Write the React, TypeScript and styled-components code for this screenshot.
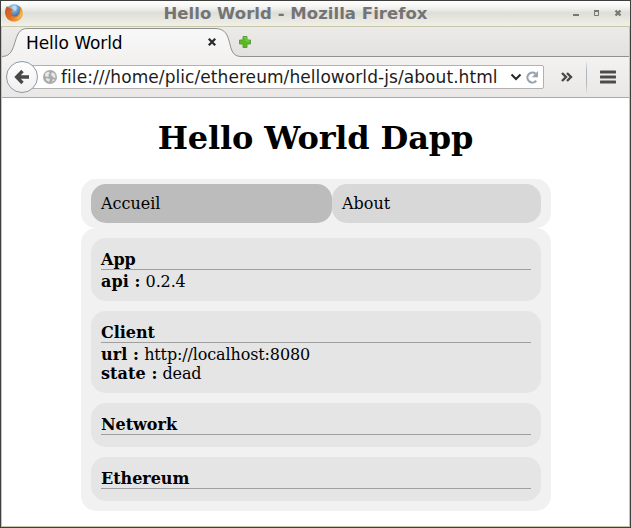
import React from 'react';
import styled, { createGlobalStyle } from 'styled-components';

const GlobalStyle = createGlobalStyle`
  * { box-sizing: border-box; }
  html, body { margin: 0; padding: 0; background: #fff; overflow: hidden; }
`;

const Window = styled.div`
  width: 631px;
  height: 528px;
  display: flex;
  flex-direction: column;
  border: 1px solid #3f403e;
  background: #fff;
`;

const TitleBar = styled.header`
  flex: none;
  height: 26px;
  display: grid;
  grid-template-columns: 20px 1fr 60px;
  align-items: center;
  border-bottom: 1px solid #c7c7ab;
  background: linear-gradient(#fff 0%, #f4f4f2 25%, #deded8 48%, #e5e5de 65%, #f0f0e7 100%);
`;

const LogoSlot = styled.div`
  padding-left: 3px;
  height: 21px;
`;

const WindowTitle = styled.div`
  text-align: center;
  font: bold 16.5px/24px 'DejaVu Sans', sans-serif;
  letter-spacing: 0.04px;
  color: #747474;
  white-space: nowrap;
`;

const Frame = styled.div`
  flex: 1;
  min-height: 0;
  display: flex;
  flex-direction: column;
  border: solid #c7c7ab;
  border-width: 0 1px 1px;
`;

const TabStrip = styled.div`
  flex: none;
  height: 30px;
  position: relative;
  background: linear-gradient(#ecebea, #e2e1e0);
`;

const TabShape = styled.svg`
  position: absolute;
  inset: 0;
`;

const TabContent = styled.div`
  position: relative;
  height: 30px;
  display: flex;
  align-items: center;
  padding-left: 24px;
`;

const TabLabel = styled.span`
  width: 181px;
  padding-top: 1px;
  font: 17px/30px 'DejaVu Sans', sans-serif;
  letter-spacing: -0.06px;
  color: #000;
`;

const NewTab = styled.span`
  display: flex;
  margin-left: 22px;
`;

const Toolbar = styled.div`
  flex: none;
  height: 41px;
  display: flex;
  align-items: center;
  border-bottom: 1px solid #aaa9a8;
  background: linear-gradient(#f3f2f1, #e9e8e7);
`;

const BackButton = styled.div`
  z-index: 1;
  width: 32px;
  height: 32px;
  flex: none;
  margin-left: 4px;
  display: flex;
  align-items: center;
  justify-content: center;
  border: 1px solid #8d9aa7;
  border-radius: 50%;
  background: linear-gradient(#fff, #efeff0);
`;

const AddressBar = styled.div`
  width: 524px;
  height: 24px;
  flex: none;
  margin-left: -18px;
  padding-left: 22px;
  display: flex;
  align-items: center;
  border: 1px solid #b2b1b0;
  border-radius: 2px;
  background: #fff;
`;

const Url = styled.span`
  flex: none;
  width: 449px;
  margin-left: 4px;
  font: 17px/22px 'DejaVu Sans', sans-serif;
  letter-spacing: 0.07px;
  color: #1c1c1c;
  white-space: nowrap;
`;

const ReloadIcon = styled.svg`
  flex: none;
  margin-left: 3px;
`;

const OverflowIcon = styled.svg`
  margin-left: 16px;
`;

const Divider = styled.i`
  width: 1px;
  height: 34px;
  margin: 0 13px 0 12px;
  background: linear-gradient(transparent, #aeb7c0 30%, #aeb7c0 70%, transparent);
`;

const Page = styled.main`
  flex: 1;
  font: 16px/19px 'DejaVu Serif', serif;
  color: #000;
`;

const Heading = styled.h1`
  margin: 21px 0 22px;
  text-align: center;
  font-size: 32px;
  line-height: 38px;
  letter-spacing: -0.15px;
`;

const Panel = styled.div<{ $nav?: boolean }>`
  width: 470px;
  margin-left: 79px;
  display: flex;
  flex-direction: ${(p) => (p.$nav ? 'row' : 'column')};
  gap: ${(p) => (p.$nav ? '0' : '10px')};
  padding: ${(p) => (p.$nav ? '5px 10px' : '10px')};
  border-radius: 15px;
  background: #f1f1f1;
`;

const NavItem = styled.a<{ $active?: boolean }>`
  width: ${(p) => (p.$active ? '241px' : '209px')};
  padding: 10px;
  border-radius: 15px;
  background: ${(p) => (p.$active ? '#bcbcbc' : '#d8d8d8')};
`;

const Card = styled.section`
  padding: 12px 10px 10px;
  border-radius: 15px;
  background: #e5e5e5;
`;

const CardTitle = styled.h2`
  margin: 0 0 2px;
  border-bottom: 1px solid #9f9f9f;
  font-size: 16px;
  line-height: 19px;
  letter-spacing: -0.03px;
`;

const RowKey = styled.b`
  letter-spacing: 0.08px;
`;

const RowValue = styled.span`
  letter-spacing: -0.13px;
`;

const sections: { title: string; rows: [string, string][] }[] = [
  { title: 'App', rows: [['api', '0.2.4']] },
  { title: 'Client', rows: [['url', 'http://localhost:8080'], ['state', 'dead']] },
  { title: 'Network', rows: [] },
  { title: 'Ethereum', rows: [] },
];

const FirefoxLogo = () => (
  <svg width="20" height="20" viewBox="0 0 20 20" display="block">
    <defs>
      <radialGradient id="globe" cx=".45" cy=".25" r=".7">
        <stop offset="0" stopColor="#b5daf0" />
        <stop offset=".6" stopColor="#5b8fc4" />
        <stop offset="1" stopColor="#2f5e99" />
      </radialGradient>
      <linearGradient id="fox" x1="0" y1="0" x2="1" y2=".6">
        <stop offset="0" stopColor="#b8572b" />
        <stop offset=".5" stopColor="#e06a24" />
        <stop offset="1" stopColor="#f0a63a" />
      </linearGradient>
    </defs>
    <circle cx="10" cy="8.500" r="7.300" fill="url(#globe)" />
    <path d="M9 3 12 2.500 13 5 11.500 8 9.500 7z" fill="#c3e2f2" opacity=".8" />
    <path d="M3 3C1.400 5.300.8 8 1.100 10.500 1.800 15.500 5.500 18.600 10 18.600c5 0 8.700-3.800 8.700-8.700 0-3-1.200-5.300-3.200-7 .6 1.500.7 3.300.4 5-.5 3.400-2.700 5.900-5.500 5.700-1.700-.1-3-1-3.600-2.300 1.400.3 2.500-.3 3.400-1.200-1.500-.3-3-.5-3.100-1.800L9.500 7C8 6.400 7.200 5.800 6 4.800 4.800 4.900 3.800 4.500 3 3z" fill="url(#fox)" />
    <path d="M16.500 5.500c1.200 5-1.300 9.800-6 10.300 3.500.8 7.200-1.500 7.200-6 0-1.700-.4-3.100-1.200-4.300z" fill="#f5c04c" />
  </svg>
);

const WindowControls = () => (
  <svg width="60" height="25" viewBox="0 0 60 25" display="block">
    <g fill="none" stroke="#777775">
      <path d="M3 14h6" strokeWidth="2" />
      <path d="M24.500 10v4.500h4V10" />
      <path d="M24 10h5" strokeWidth="2" />
      <path d="m45.500 9.500 5 5m0-5-5 5" strokeWidth="2.300" />
    </g>
  </svg>
);

export default function App() {
  return (
    <>
      <GlobalStyle />
      <Window>
        <TitleBar>
          <LogoSlot><FirefoxLogo /></LogoSlot>
          <WindowTitle>Hello World - Mozilla Firefox</WindowTitle>
          <WindowControls />
        </TitleBar>
        <Frame>
          <TabStrip>
            <TabShape width="627" height="30" viewBox="0 0 627 30">
              <defs>
                <linearGradient id="tab" x1="0" y1="0" x2="0" y2="1">
                  <stop offset="0" stopColor="#f8f8f8" />
                  <stop offset="1" stopColor="#f3f2f1" />
                </linearGradient>
              </defs>
              <path d="M0 29.500C17 29.500 9 1.500 25 1.500H213C234 1.500 222 29.500 239 29.500V30H0z" fill="url(#tab)" />
              <path d="M0 29.500C17 29.500 9 1.500 25 1.500H213C234 1.500 222 29.500 239 29.500H627" fill="none" stroke="#929191" />
            </TabShape>
            <TabContent>
              <TabLabel>Hello World</TabLabel>
              <svg width="10" height="10" viewBox="0 0 10 10"><path d="m1.800 1.800 6.400 6.400m0-6.400-6.400 6.400" stroke="#2b2b2b" strokeWidth="2.300" /></svg>
              <NewTab>
                <svg width="12" height="12" viewBox="0 0 12 12">
                  <path d="M4 .5h4V4h3.500v4H8v3.500H4V8H.5V4H4z" fill="#5cb81f" stroke="#5aa03a" />
                  <path d="M5 1.500h2V5h3.500" fill="none" stroke="#7fd040" />
                </svg>
              </NewTab>
            </TabContent>
          </TabStrip>
          <Toolbar>
            <BackButton>
              <svg width="16" height="16" viewBox="0 0 16 16"><path d="M8.500 2 2.700 8l5.800 6M3 8h12" fill="none" stroke="#484848" strokeWidth="3.400" /></svg>
            </BackButton>
            <AddressBar>
              <svg width="14" height="14" viewBox="0 0 14 14">
                <circle cx="7" cy="7" r="7" fill="#aaa" />
                <path d="M2 3.500 5 1.500l2 1.500-2 2 1.500 1L4 7 2 6zM9 2l3 2 .5 4-2-.5L8 5zM3 8l4 1-1 3-3-2zM10 9l2 1-3 2z" fill="#e7e7e7" />
              </svg>
              <Url>file:///home/plic/ethereum/helloworld-js/about.html</Url>
              <svg width="12" height="10" viewBox="0 0 12 10"><path d="m1.500 2.500 4.500 4.500 4.500-4.500" fill="none" stroke="#252525" strokeWidth="2" /></svg>
              <ReloadIcon width="14" height="14" viewBox="0 0 14 14">
                <path d="M11.200 10.800A5 5 0 1 1 10.500 3.600" fill="none" stroke="#98a5b1" strokeWidth="2.200" />
                <path d="M13 1v6.200H6.800z" fill="#98a5b1" />
              </ReloadIcon>
            </AddressBar>
            <OverflowIcon width="14" height="12" viewBox="0 0 14 12">
              <path d="m2 2 4 4-4 4m5-8 4 4-4 4" fill="none" stroke="#484848" strokeWidth="2.400" />
            </OverflowIcon>
            <Divider />
            <svg width="16" height="14" viewBox="0 0 16 14"><path d="M1 2h14M1 7h14M1 12h14" stroke="#4c4c4c" strokeWidth="3" strokeLinecap="round" /></svg>
          </Toolbar>
          <Page>
            <Heading>Hello World Dapp</Heading>
            <Panel $nav>
              <NavItem $active>Accueil</NavItem>
              <NavItem>About</NavItem>
            </Panel>
            <Panel>
              {sections.map((s) => (
                <Card key={s.title}>
                  <CardTitle>{s.title}</CardTitle>
                  {s.rows.map(([k, v]) => (
                    <div key={k}><RowKey>{k} :</RowKey> <RowValue>{v}</RowValue></div>
                  ))}
                </Card>
              ))}
            </Panel>
          </Page>
        </Frame>
      </Window>
    </>
  );
}
